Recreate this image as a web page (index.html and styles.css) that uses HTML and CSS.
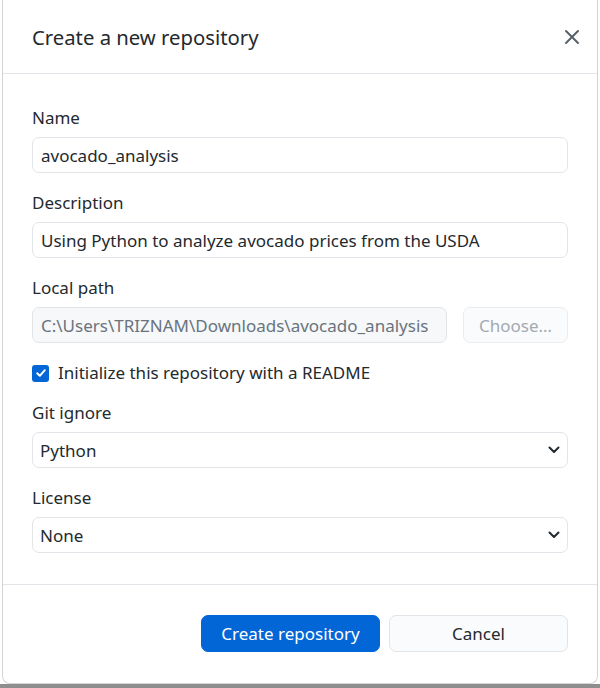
FILE: index.html
```html
<!DOCTYPE html>
<html lang="en">
<head>
<meta charset="utf-8">
<title>Create a new repository</title>
<link rel="stylesheet" href="styles.css">
</head>
<body>
<div class="dialog">
  <header class="dialog-header">
    <h1 class="dialog-title">Create a new repository</h1>
    <button class="close-btn" aria-label="Close">
      <svg width="16" height="16" viewBox="0 0 16 16"><path d="M2 2L14 14M14 2L2 14" stroke="#586069" stroke-width="2" stroke-linecap="round" fill="none"/></svg>
    </button>
  </header>
  <div class="dialog-body">
    <div class="field">
      <label class="label">Name</label>
      <div class="input">avocado_analysis</div>
    </div>
    <div class="field">
      <label class="label">Description</label>
      <div class="input">Using Python to analyze avocado prices from the USDA</div>
    </div>
    <div class="field">
      <label class="label">Local path</label>
      <div class="path-row">
        <div class="input input-disabled">C:\Users\TRIZNAM\Downloads\avocado_analysis</div>
        <div class="btn btn-choose">Choose…</div>
      </div>
    </div>
    <div class="check-row">
      <span class="checkbox">
        <svg width="12" height="12" viewBox="0 0 12 12"><path d="M2.2 6.3L4.8 8.8L9.8 3.2" stroke="#fff" stroke-width="2" fill="none" stroke-linecap="round" stroke-linejoin="round"/></svg>
      </span>
      <span class="check-label">Initialize this repository with a README</span>
    </div>
    <div class="field">
      <label class="label">Git ignore</label>
      <div class="input select">
        <span>Python</span>
        <svg class="chev" width="12" height="8" viewBox="0 0 12 8"><path d="M1.5 1.5L6 6L10.5 1.5" stroke="#24292e" stroke-width="2" fill="none" stroke-linecap="round" stroke-linejoin="round"/></svg>
      </div>
    </div>
    <div class="field">
      <label class="label">License</label>
      <div class="input select">
        <span>None</span>
        <svg class="chev" width="12" height="8" viewBox="0 0 12 8"><path d="M1.5 1.5L6 6L10.5 1.5" stroke="#24292e" stroke-width="2" fill="none" stroke-linecap="round" stroke-linejoin="round"/></svg>
      </div>
    </div>
  </div>
  <footer class="dialog-footer">
    <div class="btn btn-primary">Create repository</div>
    <div class="btn btn-secondary">Cancel</div>
  </footer>
</div>
<div class="backdrop-strip"></div>
</body>
</html>
```

FILE: styles.css
```css
* { box-sizing: border-box; }
html, body {
  margin: 0;
  padding: 0;
  background: #ffffff;
}
body {
  font-family: "Noto Sans", "Open Sans", sans-serif;
  color: #24292e;
  width: 600px;
  height: 688px;
  overflow: hidden;
  display: flex;
  flex-direction: column;
}
.dialog {
  margin-left: 2px;
  width: 596px;
  height: 684px;
  border: 1px solid #d4d4d4;
  border-top: none;
  border-radius: 0 0 8px 8px;
  background: #fff;
  display: flex;
  flex-direction: column;
  flex-shrink: 0;
}
.dialog-header {
  height: 74px;
  border-bottom: 1px solid #e1e4e8;
  display: flex;
  align-items: center;
  justify-content: space-between;
  padding: 0 13px 0 29px;
}
.dialog-title {
  margin: 0;
  font-size: 20.3px;
  font-weight: 400;
  color: #24292e;
  line-height: 26px;
  margin-top: 1px;
}
.close-btn {
  border: none;
  background: none;
  padding: 0;
  width: 24px;
  height: 24px;
  display: flex;
  align-items: center;
  justify-content: center;
  margin-top: 1px;
}
.dialog-body {
  padding: 34px 29px 31px 29px;
  display: flex;
  flex-direction: column;
  gap: 20px;
  border-bottom: 1px solid #e1e4e8;
}
.field {
  display: flex;
  flex-direction: column;
  gap: 9px;
}
.label {
  font-size: 17px;
  line-height: 20px;
  color: #24292e;
}
.input {
  height: 36px;
  border: 1px solid #e1e4e8;
  border-radius: 7px;
  padding: 0 8px;
  font-size: 17px;
  display: flex;
  align-items: center;
  color: #24292e;
  background: #fff;
  white-space: nowrap;
}
.path-row {
  display: flex;
  gap: 16px;
}
.input-disabled {
  flex: 1;
  background: #f6f8fa;
  color: #6a737d;
}
.btn {
  height: 37px;
  border-radius: 7px;
  display: flex;
  align-items: center;
  justify-content: center;
  font-size: 17px;
  white-space: nowrap;
}
.btn-choose {
  width: 105px;
  height: 36px;
  border: 1px solid #eaecef;
  background: #fafbfc;
  color: #a3aab1;
}
.check-row {
  display: flex;
  align-items: center;
  gap: 9px;
  height: 20px;
}
.checkbox {
  width: 17px;
  height: 17px;
  border-radius: 3px;
  background: #0366d6;
  display: flex;
  align-items: center;
  justify-content: center;
}
.check-label {
  font-size: 17px;
  line-height: 20px;
}
.select {
  justify-content: space-between;
  padding: 0 7px 0 7px;
}
.dialog-footer {
  flex: 1;
  display: flex;
  justify-content: flex-end;
  align-items: flex-start;
  gap: 9px;
  padding: 30px 29px 0 0;
}
.btn-primary {
  width: 179px;
  background: #0366d6;
  color: #fff;
  border: 1px solid #0366d6;
}
.btn-secondary {
  width: 179px;
  background: #fafbfc;
  border: 1px solid #e1e4e8;
  color: #24292e;
}
.backdrop-strip {
  flex: 1;
  background: #8e8e8e;
}
```
